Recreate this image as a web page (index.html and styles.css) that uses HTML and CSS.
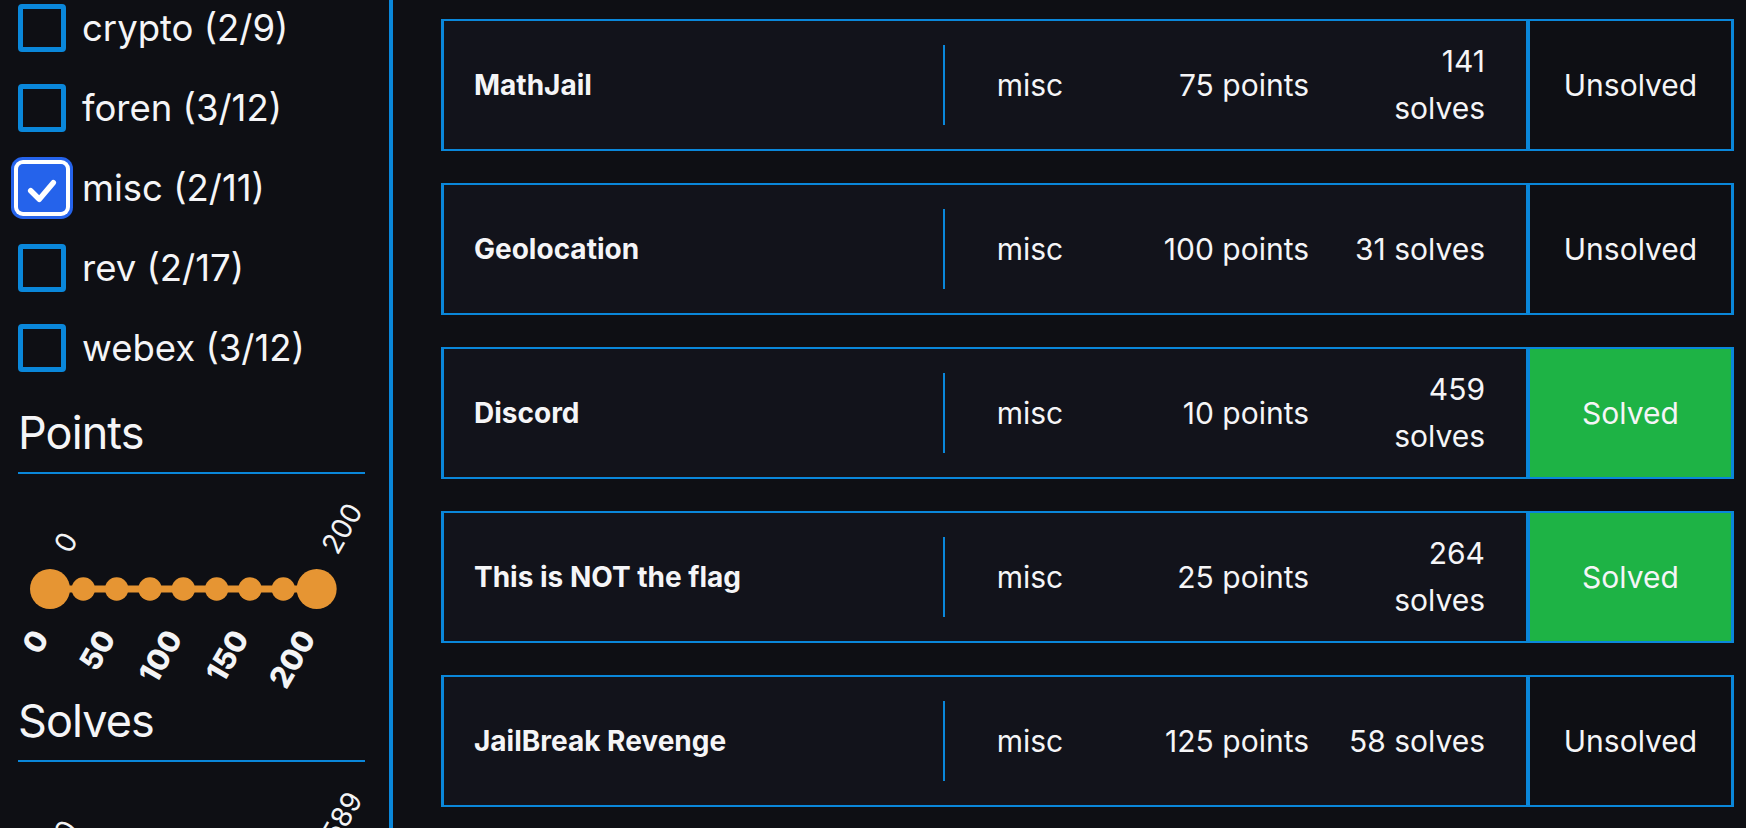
FILE: index.html
```html
<!DOCTYPE html>
<html lang="en">
<head>
<meta charset="utf-8">
<title>Challenges</title>
<link rel="stylesheet" href="styles.css">
</head>
<body>
<div class="page">
  <aside class="sidebar">
    <ul class="filters">
      <li class="filter"><span class="box"></span><span class="label">crypto (2/9)</span></li>
      <li class="filter"><span class="box"></span><span class="label">foren (3/12)</span></li>
      <li class="filter"><span class="box checked"><svg viewBox="0 0 48 48" width="48" height="48"><path d="M12.7 26.7 L21.3 35.3 L35.3 18.7" fill="none" stroke="#fff" stroke-width="5.5" stroke-linecap="round" stroke-linejoin="round"/></svg></span><span class="label">misc (2/11)</span></li>
      <li class="filter"><span class="box"></span><span class="label">rev (2/17)</span></li>
      <li class="filter"><span class="box"></span><span class="label">webex (3/12)</span></li>
    </ul>

    <h2 class="section-title first">Points</h2>
    <hr class="rule">
    <svg class="range" viewBox="0 0 347 220" width="347" height="220">
      <line x1="32" y1="115" x2="298.67" y2="115" stroke="#e69533" stroke-width="7"/>
      <g fill="#e69533">
        <circle cx="65.33" cy="115" r="11.7"/>
        <circle cx="98.67" cy="115" r="11.7"/>
        <circle cx="132" cy="115" r="11.7"/>
        <circle cx="165.33" cy="115" r="11.7"/>
        <circle cx="198.67" cy="115" r="11.7"/>
        <circle cx="232" cy="115" r="11.7"/>
        <circle cx="265.33" cy="115" r="11.7"/>
        <circle cx="32" cy="115" r="20"/>
        <circle cx="298.67" cy="115" r="20"/>
      </g>
      <g class="val-label">
        <text x="52" y="81" transform="rotate(-60 52 81)">0</text>
        <text x="319.5" y="82" transform="rotate(-60 319.5 82)">200</text>
      </g>
      <g class="pip-label">
        <text x="32" y="164" transform="rotate(-60 32 164)">0</text>
        <text x="98.67" y="164" transform="rotate(-60 98.67 164)">50</text>
        <text x="165.33" y="164" transform="rotate(-60 165.33 164)">100</text>
        <text x="232" y="164" transform="rotate(-60 232 164)">150</text>
        <text x="298.67" y="164" transform="rotate(-60 298.67 164)">200</text>
      </g>
    </svg>

    <h2 class="section-title">Solves</h2>
    <hr class="rule">
    <svg class="range" viewBox="0 0 347 220" width="347" height="220">
      <g class="val-label">
        <text x="52" y="81" transform="rotate(-60 52 81)">0</text>
        <text x="319.5" y="82" transform="rotate(-60 319.5 82)">589</text>
      </g>
    </svg>
  </aside>

  <main class="challenges">
    <div class="card">
      <div class="card-body">
        <div class="title">MathJail</div>
        <div class="divider"></div>
        <div class="cat">misc</div>
        <div class="pts">75 points</div>
        <div class="solves">141 solves</div>
      </div>
      <div class="status">Unsolved</div>
    </div>
    <div class="card">
      <div class="card-body">
        <div class="title">Geolocation</div>
        <div class="divider"></div>
        <div class="cat">misc</div>
        <div class="pts">100 points</div>
        <div class="solves">31 solves</div>
      </div>
      <div class="status">Unsolved</div>
    </div>
    <div class="card">
      <div class="card-body">
        <div class="title">Discord</div>
        <div class="divider"></div>
        <div class="cat">misc</div>
        <div class="pts">10 points</div>
        <div class="solves">459 solves</div>
      </div>
      <div class="status solved">Solved</div>
    </div>
    <div class="card">
      <div class="card-body">
        <div class="title">This is NOT the flag</div>
        <div class="divider"></div>
        <div class="cat">misc</div>
        <div class="pts">25 points</div>
        <div class="solves">264 solves</div>
      </div>
      <div class="status solved">Solved</div>
    </div>
    <div class="card">
      <div class="card-body">
        <div class="title">JailBreak Revenge</div>
        <div class="divider"></div>
        <div class="cat">misc</div>
        <div class="pts">125 points</div>
        <div class="solves">58 solves</div>
      </div>
      <div class="status">Unsolved</div>
    </div>
  </main>
</div>
</body>
</html>
```

FILE: styles.css
```css
* { box-sizing: border-box; }

html, body {
  margin: 0;
  padding: 0;
  height: 100%;
  overflow: hidden;
}

body {
  background: #0e0f14;
  color: #f5f5f7;
  font-family: Inter, "Noto Sans", "Liberation Sans", sans-serif;
}

.page {
  display: flex;
  height: 100vh;
}

/* ---------- sidebar ---------- */
.sidebar {
  width: 393px;
  flex: 0 0 393px;
  border-right: 4px solid #0a87da;
  padding: 4px 24px 0 18px;
  overflow: hidden;
}

.filters {
  list-style: none;
  margin: 0;
  padding: 0;
  display: flex;
  flex-direction: column;
  gap: 32px;
}

.filter {
  display: flex;
  align-items: center;
  height: 48px;
  font-size: 36.5px;
  white-space: nowrap;
}

.box {
  width: 48px;
  height: 48px;
  flex: 0 0 48px;
  border: 5px solid #0a87da;
  border-radius: 4px;
  display: block;
}

.box.checked {
  border: none;
  background: #2563eb;
  border-radius: 5px;
  box-shadow: 0 0 0 4px #ffffff, 0 0 0 7px #2563eb;
}

.box svg { display: block; }

.label {
  margin-left: 16px;
}

.section-title {
  margin: 0;
  font-size: 45px;
  font-weight: 400;
  line-height: 54px;
  letter-spacing: -0.02em;
}

.section-title.first {
  margin-top: 34px;
}

.rule {
  border: none;
  height: 2px;
  background: #0a87da;
  margin: 12px 0 0;
}

.range {
  display: block;
  overflow: visible;
}

.val-label text {
  font-family: Inter, "Noto Sans", sans-serif;
  font-size: 28px;
  font-weight: 400;
  fill: #f3f4f6;
}

.pip-label text {
  font-family: Inter, "Noto Sans", sans-serif;
  font-size: 30px;
  font-weight: 800;
  fill: #f3f4f6;
  text-anchor: end;
}

/* ---------- challenge list ---------- */
.challenges {
  flex: 1;
  padding: 19px 12px 0 48px;
  display: flex;
  flex-direction: column;
  gap: 32px;
}

.card {
  display: flex;
  height: 132px;
  flex: 0 0 132px;
}

.card-body {
  flex: 1;
  display: flex;
  align-items: center;
  background: #12131b;
  border: 2px solid #0a87da;
  border-left-width: 3px;
  padding-right: 41px;
  font-size: 30px;
}

.title {
  flex: 1;
  padding-left: 30px;
  font-size: 28px;
  font-weight: 700;
}

.divider {
  width: 2px;
  height: 80px;
  background: #0a87da;
}

.cat {
  width: 170px;
  text-align: center;
}

.pts {
  width: 194px;
  text-align: right;
}

.solves {
  width: 176px;
  padding-left: 36px;
  text-align: right;
  line-height: 47px;
}

.status {
  width: 206px;
  flex: 0 0 206px;
  display: flex;
  align-items: center;
  justify-content: center;
  border: 2px solid #0a87da;
  border-right-width: 3px;
  font-size: 30px;
  background: #0e0f14;
}

.status.solved {
  background: #1eb345;
}
```
